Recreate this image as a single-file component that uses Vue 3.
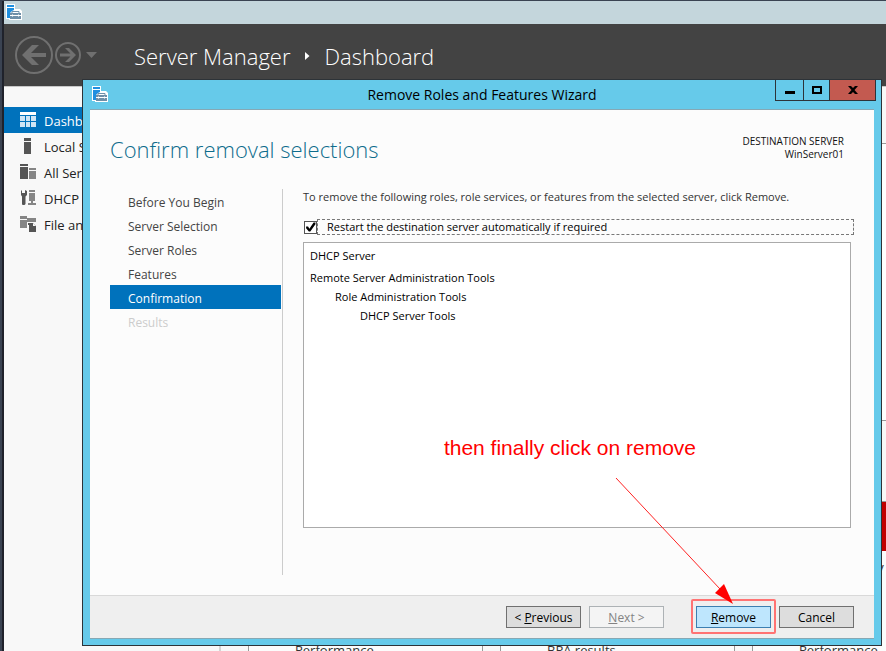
<script setup>
import { ref } from 'vue'

const navItems = [
  { label: 'Dashboard', icon: 'dashboard' },
  { label: 'Local Server', icon: 'server' },
  { label: 'All Servers', icon: 'servers' },
  { label: 'DHCP', icon: 'dhcp' },
  { label: 'File and Storage Services', icon: 'files' },
]

const steps = [
  { label: 'Before You Begin' },
  { label: 'Server Selection' },
  { label: 'Server Roles' },
  { label: 'Features' },
  { label: 'Confirmation', current: true },
  { label: 'Results', disabled: true },
]

const removals = [
  { label: 'DHCP Server', level: 0 },
  { label: 'Remote Server Administration Tools', level: 0, group: true },
  { label: 'Role Administration Tools', level: 1 },
  { label: 'DHCP Server Tools', level: 2 },
]

const tiles = [
  { rows: ['Performance'] },
  { rows: ['BPA results'] },
  { rows: ['Manageability', 'Performance'], alert: true },
]

const restart = ref(true)
</script>

<template>
  <div class="desktop">
    <div class="app">
      <div class="titlebar">
        <svg width="16" height="16" viewBox="0 0 16 16" aria-hidden="true">
          <path d="M0 0h9v5h5l2 2v9H3v-1H0z" fill="#fff" />
          <path d="M1 1h7v2H1zM1 4h7v2L6 7 4 9v5H1z" fill="#1f8fe0" />
          <path d="M4 9h11v6H4z" fill="#6f8fa8" />
          <path d="M6 9V7.500h7V9" stroke="#6f8fa8" fill="none" />
          <path d="M4 11.500h11M6.500 10.500v2M12.500 10.500v2" stroke="#fff" fill="none" />
        </svg>
      </div>

      <header class="header">
        <div class="history">
          <button class="round" aria-label="Back">
            <svg width="38" height="38" viewBox="0 0 38 38">
              <circle cx="19" cy="19" r="18" fill="none" stroke="#707070" stroke-width="2" />
              <path d="M7 19L17 9h7l-8 8h15v4H16l8 8h-7z" fill="#707070" />
            </svg>
          </button>
          <button class="round" aria-label="Forward">
            <svg width="26" height="26" viewBox="0 0 26 26">
              <circle cx="13" cy="13" r="12" fill="none" stroke="#707070" stroke-width="2" />
              <path d="M21 13l-7-7h-4l5.500 5.500H5v3h10.500L10 20h4z" fill="#707070" />
            </svg>
          </button>
          <button class="round drop" aria-label="History">
            <svg width="11" height="6" viewBox="0 0 11 6"><path d="M0 0h11L5.500 6z" fill="#707070" /></svg>
          </button>
        </div>
        <h1 class="crumbs">
          <span>Server Manager</span>
          <svg width="6" height="8" viewBox="0 0 6 8" aria-hidden="true"><path d="M1 0l4.500 4L1 8z" fill="#fff" /></svg>
          <span>Dashboard</span>
        </h1>
      </header>

      <div class="body">
        <nav class="sidebar">
          <a v-for="(item, i) in navItems" :key="item.label" href="#" class="nav" :class="{ active: i === 0 }">
            <svg width="16" height="16" viewBox="0 0 16 16" aria-hidden="true">
              <template v-if="item.icon === 'dashboard'">
                <path d="M0 0h16v3H0z" fill="#fff" />
                <path d="M0 4h5v5H0zM6 4h4v5H6zM11 4h5v5h-5zM0 10h5v5H0zM6 10h4v5H6zM11 10h5v5h-5z" fill="#cfe5f5" />
              </template>
              <template v-else-if="item.icon === 'server'">
                <path d="M4 0h7v3H4zM4 4h7v12H4z" fill="#555" />
              </template>
              <template v-else-if="item.icon === 'servers'">
                <path d="M0 0h8v2H0zM0 3h8v12H0z" fill="#555" />
                <path d="M9 4h7v2H9zM9 7h7v8H9z" fill="#858585" />
              </template>
              <template v-else-if="item.icon === 'dhcp'">
                <path d="M2 0v3h3V0l2 1v4L5.500 6.500V14l-1 1h-2l-.500-1V6.500L1 5V1z" fill="#555" />
                <path d="M9 0h6v2H9zM9 3h6v8h-2v2h3v2H8v-2h3v-2H9z" fill="#858585" />
              </template>
              <template v-else>
                <path d="M0 0h7v2h9v10H0z" fill="#858585" />
                <path d="M0 3h7v1H0zM7 6h9v6h-2v4H7z" fill="#f8f8f8" />
                <path d="M8 7h5l3 3v6H9V9H8z" fill="#555" />
                <path d="M13 7l3 3h-3z" fill="#f8f8f8" />
              </template>
            </svg>
            <span>{{ item.label }}</span>
          </a>
        </nav>

        <main class="dash">
          <div class="welcome"></div>
          <div class="tiles">
            <section v-for="(tile, i) in tiles" :key="i" class="tile" :class="{ alert: tile.alert }">
              <div class="tile-head"></div>
              <ul class="tile-rows">
                <li v-for="row in tile.rows" :key="row">{{ row }}</li>
              </ul>
            </section>
          </div>
        </main>
      </div>
    </div>

    <section class="wizard" role="dialog" aria-labelledby="wizard-title">
      <div class="wizard-bar">
        <svg class="wizard-icon" width="16" height="16" viewBox="0 0 16 16" aria-hidden="true">
          <path d="M0 0h9v5h5l2 2v9H3v-1H0z" fill="#fff" />
          <path d="M1 1h7v2H1zM1 4h7v2L6 7 4 9v5H1z" fill="#1f8fe0" />
          <path d="M4 9h11v6H4z" fill="#6f8fa8" />
          <path d="M6 9V7.500h7V9" stroke="#6f8fa8" fill="none" />
          <path d="M4 11.500h11M6.500 10.500v2M12.500 10.500v2" stroke="#fff" fill="none" />
        </svg>
        <h2 id="wizard-title">Remove Roles and Features Wizard</h2>
        <div class="controls">
          <button class="ctl min" aria-label="Minimize">
            <svg width="10" height="10" viewBox="0 0 10 10"><path d="M0 6h10v3H0z" /></svg>
          </button>
          <button class="ctl max" aria-label="Maximize">
            <svg width="10" height="8" viewBox="0 0 10 8"><path d="M0 0h10v8H0zM2 2v4h6V2z" fill-rule="evenodd" /></svg>
          </button>
          <button class="ctl close" aria-label="Close">
            <svg width="10" height="8" viewBox="0 0 10 8"><path d="M0 0h3l2 2 2-2h3L6.500 4 10 8H7L5 6 3 8H0l3.500-4z" /></svg>
          </button>
        </div>
      </div>

      <div class="client">
        <div class="heading">
          <h3>Confirm removal selections</h3>
          <p class="dest">DESTINATION SERVER<br />WinServer01</p>
        </div>

        <div class="columns">
          <ol class="steps">
            <li v-for="s in steps" :key="s.label" :class="{ current: s.current, disabled: s.disabled }">{{ s.label }}</li>
          </ol>

          <div class="content">
            <p class="intro">To remove the following roles, role services, or features from the selected server, click Remove.</p>
            <div class="restart">
              <input id="restart" v-model="restart" type="checkbox" />
              <label for="restart">Restart the destination server automatically if required</label>
            </div>
            <ul class="removals">
              <li v-for="r in removals" :key="r.label" :class="['level-' + r.level, { group: r.group }]">{{ r.label }}</li>
            </ul>
          </div>
        </div>

        <footer class="actions">
          <button class="btn">&lt; <u>P</u>revious</button>
          <button class="btn" disabled><u>N</u>ext &gt;</button>
          <span class="marked"><button class="btn primary"><u>R</u>emove</button></span>
          <button class="btn">Cancel</button>
        </footer>
      </div>

      <p class="note">then finally click on remove</p>
      <svg class="arrow" width="120" height="130" viewBox="0 0 120 130" aria-hidden="true">
        <path d="M1 1L105 112" stroke="#f22" fill="none" />
        <path d="M118 127L100 116L109 107z" fill="#f00" />
      </svg>
    </section>
  </div>
</template>

<style>
body {
  margin: 0;
  font-family: "Open Sans", "Noto Sans", sans-serif;
}
</style>

<style scoped>
* {
  box-sizing: border-box;
}
h1, h2, h3, p, ul, ol {
  margin: 0;
  padding: 0;
  font-weight: 400;
  list-style: none;
}
button {
  font: inherit;
  padding: 0;
}
svg {
  display: block;
  flex: none;
}
.desktop {
  position: relative;
  height: 100vh;
  overflow: hidden;
  padding: 1px 0 0 2px;
  background: #3a4352;
}
.app {
  display: flex;
  flex-direction: column;
  height: 100%;
  border-left: 2px solid #1f222b;
  background: #f8f8f8;
}
.titlebar {
  flex: none;
  height: 23px;
  padding: 3px 2px;
  background: #c4d6dc;
}
.header {
  flex: none;
  display: flex;
  align-items: center;
  height: 63px;
  padding-left: 11px;
  gap: 37px;
  background: #434343;
  border-bottom: 1px solid #c8c8c8;
}
.history {
  display: flex;
  align-items: center;
  gap: 2px;
}
.round {
  border: 0;
  background: none;
}
.drop {
  padding-left: 3px;
}
.crumbs {
  display: flex;
  align-items: center;
  gap: 14px;
  padding-top: 2px;
  font-size: 22px;
  line-height: 32px;
  font-weight: 300;
  color: #fff;
}
.body {
  flex: 1;
  display: flex;
  min-height: 0;
}
.sidebar {
  flex: none;
  width: 217px;
  padding-top: 20px;
  border-right: 2px solid #d4d4d4;
}
.nav {
  display: flex;
  align-items: center;
  gap: 8px;
  height: 26px;
  padding-left: 16px;
  font-size: 13px;
  color: #222;
  text-decoration: none;
  white-space: nowrap;
}
.nav span {
  padding-top: 2px;
}
.nav.active {
  background: #0072bc;
  color: #fff;
}
.dash {
  flex: 1;
  min-width: 0;
  overflow: hidden;
  padding: 56px 0 0 27px;
}
.welcome {
  height: 278px;
  border: solid #999;
  border-width: 1px 0 1px 1px;
  background: #fff;
}
.tiles {
  display: flex;
  gap: 17px;
  margin-top: 80px;
}
.tile {
  flex: none;
  display: flex;
  flex-direction: column;
  width: 235px;
  height: 190px;
  border: 1px solid #999;
  background: #fcfcfc;
}
.tile-head {
  height: 49px;
}
.alert .tile-head {
  background: #c00000;
}
.tile-rows {
  flex: 1;
  display: flex;
  flex-direction: column;
  justify-content: flex-end;
  padding: 6px 0 30px 46px;
  font-size: 13px;
  line-height: 20px;
  color: #333;
}
.alert .tile-rows {
  justify-content: space-between;
}
.wizard {
  position: absolute;
  inset: 79px 4px 5px 82px;
  display: flex;
  flex-direction: column;
  padding: 0 7px 6px;
  border: 1px solid #2d3338;
  background: #66caea;
}
.wizard-bar {
  flex: none;
  display: grid;
  grid-template-columns: 100px 1fr 100px;
  height: 29px;
}
.wizard-icon {
  margin: 6px 2px;
}
.wizard-bar h2 {
  font-size: 14px;
  line-height: 29px;
  text-align: center;
  color: #000;
}
.controls {
  display: flex;
  justify-self: end;
  height: 22px;
  margin-top: -1px;
  margin-right: -2px;
}
.ctl {
  display: grid;
  place-items: center;
  width: 29px;
  border: 1px solid #2d3338;
  background: none;
}
.ctl + .ctl {
  margin-left: -1px;
}
.ctl.max {
  width: 27px;
}
.ctl.close {
  width: 47px;
  background: #c35a50;
}
.client {
  flex: 1;
  display: flex;
  flex-direction: column;
  min-height: 0;
  border-top: 1px solid #86a8b4;
  border-bottom: 1px solid #86a8b4;
  background: #fcfcfc;
}
.heading {
  display: flex;
  justify-content: space-between;
  padding: 23px 30px 0 20px;
  height: 79px;
}
.heading h3 {
  font-size: 22px;
  line-height: 32px;
  font-weight: 300;
  color: #0e6c8c;
}
.dest {
  padding-top: 2px;
  font-size: 10px;
  line-height: 13px;
  text-align: right;
  color: #111;
}
.columns {
  flex: 1;
  display: flex;
  min-height: 0;
  padding: 0 20px 20px;
}
.steps {
  flex: none;
  width: 173px;
  padding-right: 1px;
  border-right: 1px solid #ccc;
  font-size: 12px;
  line-height: 20px;
  color: #444;
}
.steps li {
  padding: 4px 0 0 18px;
}
.steps .current {
  background: #0072bc;
  color: #fff;
}
.steps .disabled {
  color: #ccc;
}
.content {
  flex: 1;
  display: flex;
  flex-direction: column;
  padding-left: 20px;
  font-size: 11px;
}
.intro {
  line-height: 16px;
  margin-bottom: 14px;
  color: #333;
  white-space: nowrap;
}
.restart {
  display: flex;
  align-items: center;
  height: 16px;
  padding-left: 1px;
}
.restart input {
  appearance: none;
  flex: none;
  width: 13px;
  height: 13px;
  margin: 0;
  border: 1px solid #555;
  background: #fff;
}
.restart input:checked::before {
  content: "";
  display: block;
  width: 11px;
  height: 11px;
  background: #000;
  clip-path: polygon(10% 45%, 28% 45%, 40% 65%, 78% 10%, 95% 10%, 95% 25%, 48% 92%, 35% 92%, 10% 62%);
}
.restart label {
  flex: 1;
  padding-left: 9px;
  border: 1px dashed #777;
  line-height: 14px;
  color: #000;
}
.removals {
  flex: 1;
  margin: 7px 3px 47px 0;
  padding: 3px 6px;
  border: 1px solid #aaa;
  background: #fff;
  line-height: 19px;
  color: #000;
}
.removals .group {
  margin-top: 3px;
}
.level-1 {
  padding-left: 25px;
}
.level-2 {
  padding-left: 50px;
}
.actions {
  flex: none;
  display: flex;
  justify-content: flex-end;
  gap: 8px;
  padding: 10px 20px;
  border-top: 1px solid #d9d9d9;
  background: #efefef;
  font-size: 12px;
}
.btn {
  display: block;
  width: 75px;
  height: 22px;
  padding-top: 1px;
  border: 1px solid #707070;
  background: #ddd;
  color: #000;
  line-height: 19px;
}
.btn:disabled {
  border-color: #adb2b5;
  background: #f4f4f4;
  color: #838383;
}
.btn.primary {
  border-color: #3c7fb1;
  background: #bee6fd;
}
.marked {
  position: relative;
  margin-left: 24px;
}
.marked::after {
  content: "";
  position: absolute;
  inset: -7px -5px -6px -5px;
  border: 2px solid #ff7373;
  border-radius: 2px;
  pointer-events: none;
}
.note {
  position: absolute;
  right: 185px;
  bottom: 184px;
  font: 21px/26px "Liberation Sans", Arial, sans-serif;
  color: #f00;
  white-space: nowrap;
}
.arrow {
  position: absolute;
  right: 146px;
  bottom: 38px;
  pointer-events: none;
}
</style>
